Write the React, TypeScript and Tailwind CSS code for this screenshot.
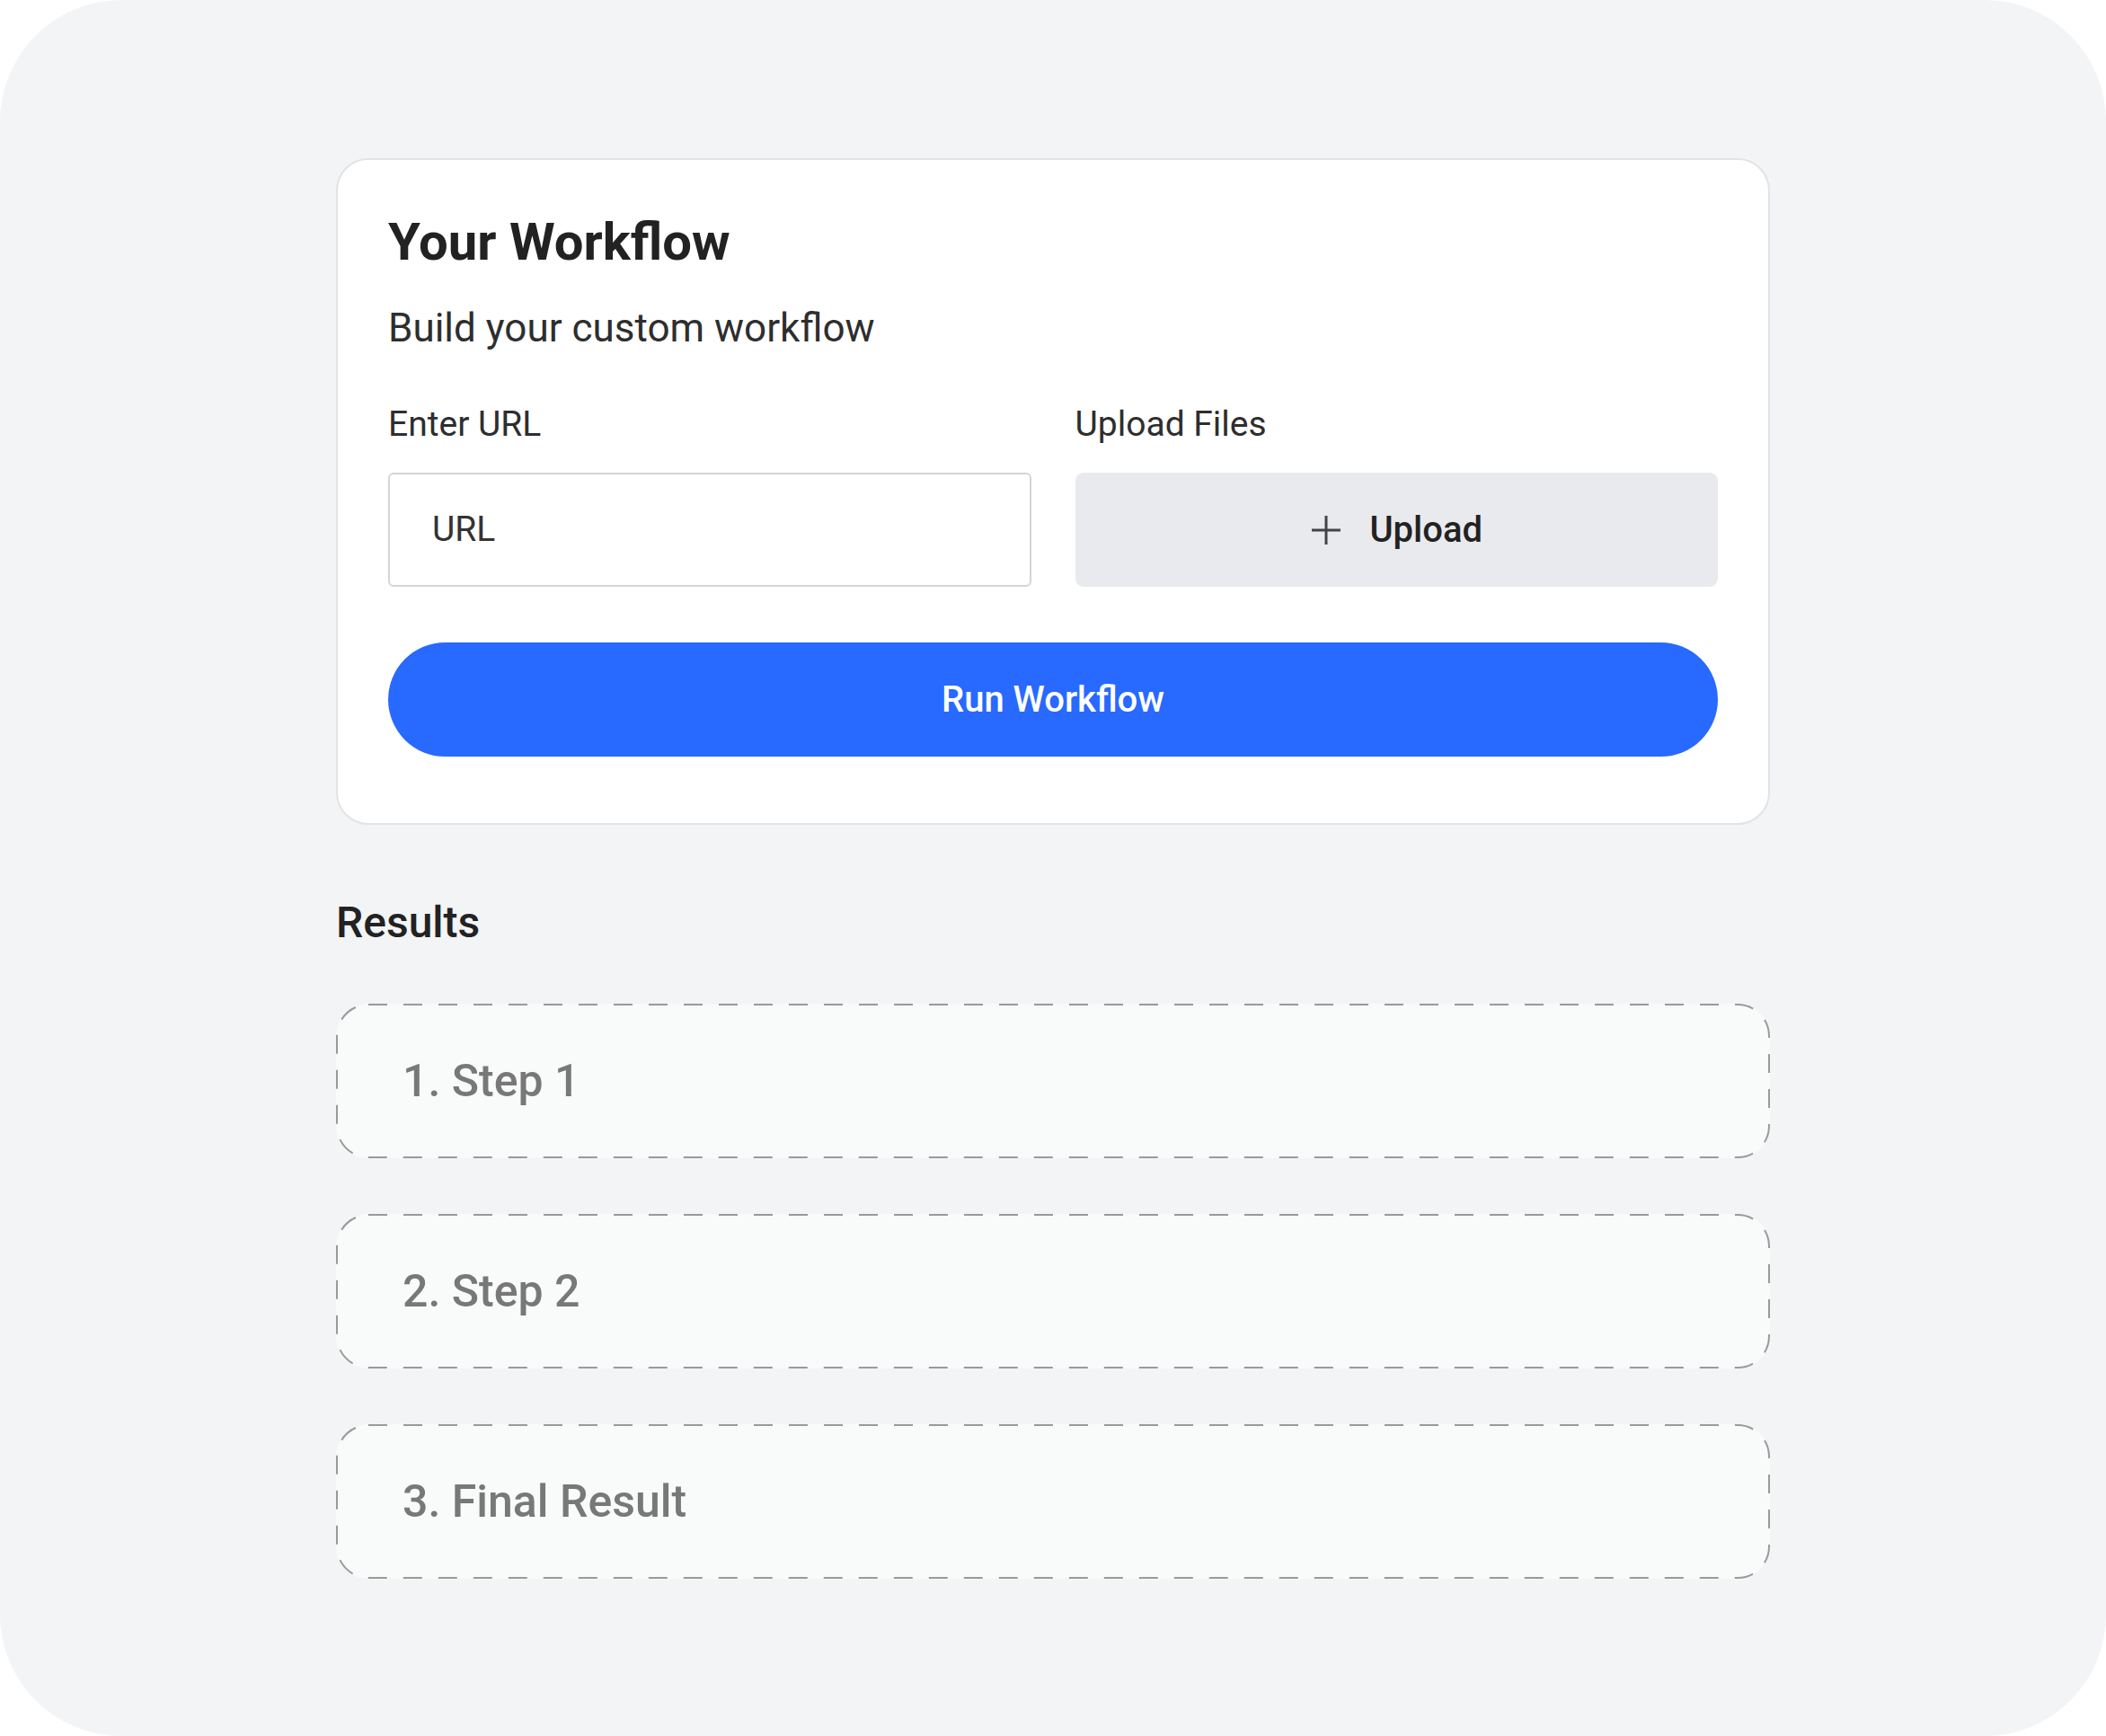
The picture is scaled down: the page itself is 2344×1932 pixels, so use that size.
import React from "react";

function DashedBox({ label }: { label: string }) {
  return (
    <div className="relative h-[172px] rounded-[36px] bg-[#f9fafa] flex items-center pl-[74px]">
      <svg className="absolute inset-0 w-full h-full pointer-events-none" preserveAspectRatio="none">
        <rect x="1" y="1" width="calc(100% - 2px)" height="calc(100% - 2px)" rx="35" ry="35" fill="none" stroke="#9a9a9a" strokeWidth="2" strokeDasharray="21 18" style={{ width: "calc(100% - 2px)", height: "calc(100% - 2px)" }} />
      </svg>
      <span className="relative text-[50px] leading-[60px] font-medium text-[#787878]">{label}</span>
    </div>
  );
}

export default function App() {
  return (
    <div className="bg-white min-h-screen" style={{ fontFamily: "Roboto, 'Liberation Sans', sans-serif" }}>
      <div className="w-[2344px] h-[1932px] bg-[#f3f4f6] rounded-[135px] pt-[176px] pl-[374px]">
        <div className="w-[1596px]">
          <div className="bg-white border-2 border-[#e2e3e5] rounded-[36px] pt-[56px] pb-[74px] px-[56px]">
            <h1 className="text-[58px] leading-[70px] font-bold text-[#222222]">Your Workflow</h1>
            <p className="mt-[31px] text-[44px] leading-[60px] text-[#2e2e2e]">Build your custom workflow</p>
            <div className="mt-[52px] grid grid-cols-2 gap-[49px]">
              <div>
                <div className="text-[39px] leading-[50px] text-[#2e2e2e]">Enter URL</div>
                <div className="mt-[29px] h-[127px] border-2 border-[#d4d5d8] rounded-[6px] flex items-center pl-[47px] text-[39px] text-[#333333]">URL</div>
              </div>
              <div>
                <div className="text-[39px] leading-[50px] text-[#2e2e2e]">Upload Files</div>
                <div className="mt-[29px] h-[127px] bg-[#e9eaee] rounded-[9px] flex items-center justify-center gap-[30px]">
                  <svg width="36" height="36" viewBox="0 0 36 36">
                    <line x1="18" y1="2" x2="18" y2="34" stroke="#444" strokeWidth="3" />
                    <line x1="2" y1="18" x2="34" y2="18" stroke="#444" strokeWidth="3" />
                  </svg>
                  <span className="text-[40px] font-medium text-[#222222]">Upload</span>
                </div>
              </div>
            </div>
            <div className="mt-[62px] h-[127px] rounded-full bg-[#2869ff] flex items-center justify-center">
              <span className="text-[40px] font-medium text-white">Run Workflow</span>
            </div>
          </div>
          <h2 className="mt-[79px] text-[48px] leading-[60px] font-medium text-[#222222]">Results</h2>
          <div className="mt-[60px] flex flex-col gap-[62px]">
            <DashedBox label="1. Step 1" />
            <DashedBox label="2. Step 2" />
            <DashedBox label="3. Final Result" />
          </div>
        </div>
      </div>
    </div>
  );
}
